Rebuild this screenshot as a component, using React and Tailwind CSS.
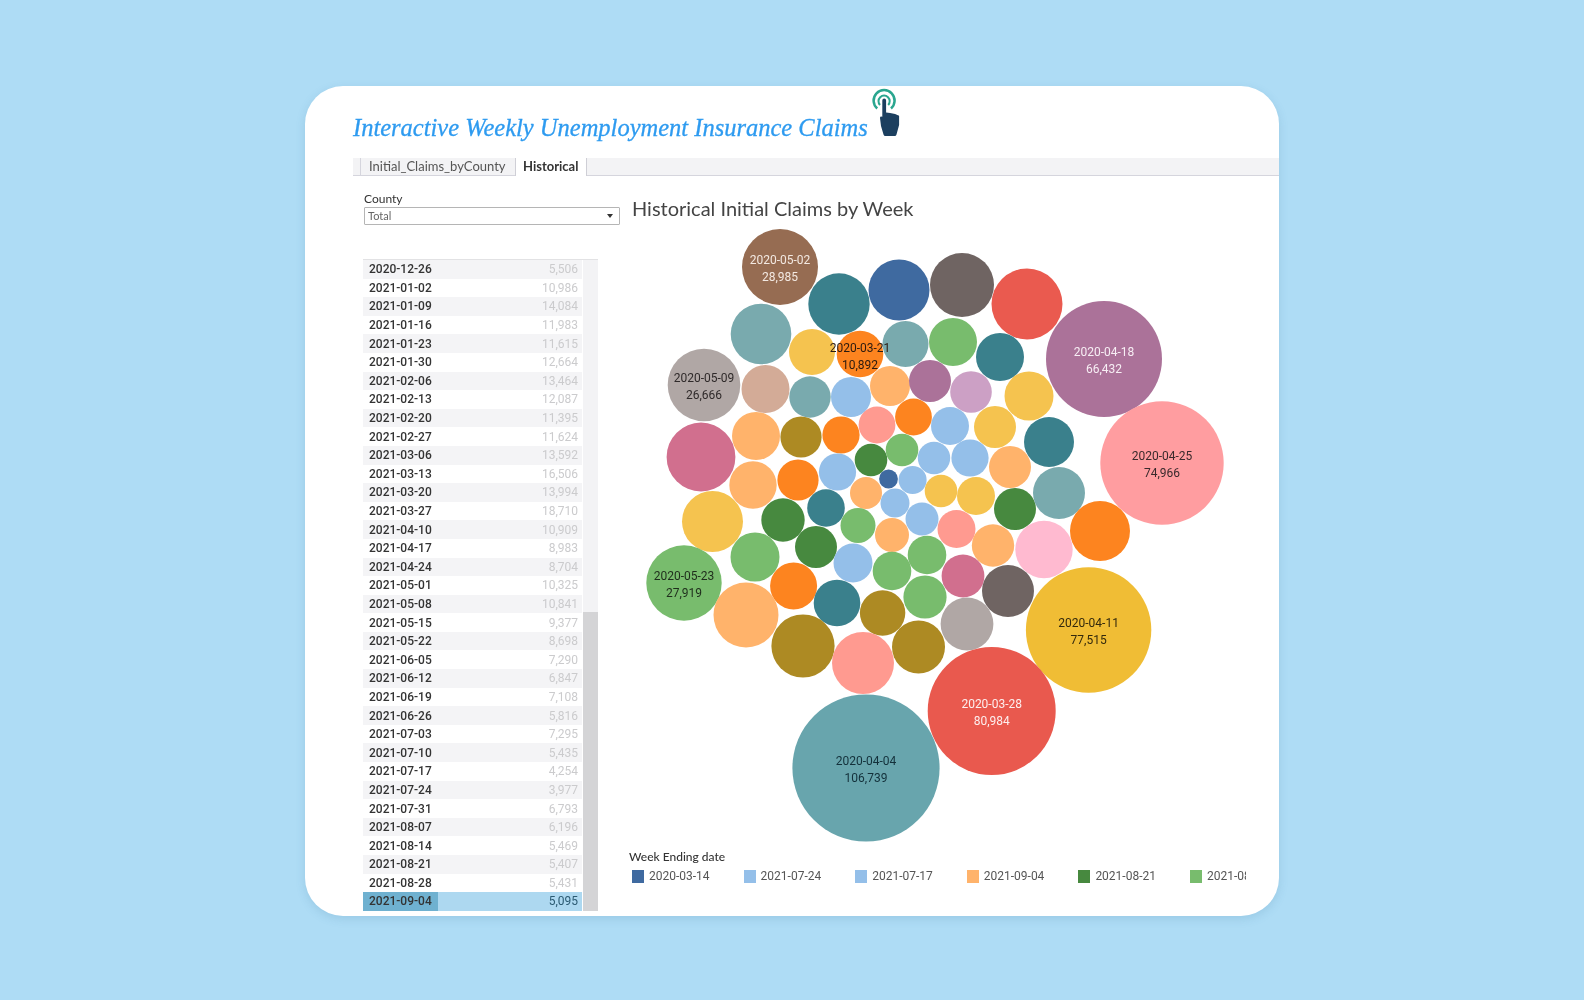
import React from "react";

const tealDark = "#3a808c", blue = "#3f6aa0", stone = "#6f6462", red = "#ea5a4f", purple = "#ab7299";
const pink = "#ff9da0", teal = "#79aaae", yellow = "#f5c34f", orange = "#fd841f", green = "#78bc6d";
const darkGreen = "#47893f", skyBlue = "#94bfe9", peach = "#ffb36b", olive = "#ad8a23", salmon = "#ff9a90";
const rose = "#d16f8e", tan = "#d3ab97", gray = "#b0a7a5", lilac = "#cca0c5", lightPink = "#ffbad0";

// cx, cy, r, fill, [date, value, text colour]
const bubbles = [
    [780, 267, 38, "#966c52", "2020-05-02", "28,985", "#f3e9e2"],
    [839, 304, 30.7, tealDark], [899, 290, 30.5, blue], [962, 285, 32, stone], [1027, 304, 35.5, red],
    [1104, 359, 58, purple, "2020-04-18", "66,432", "#f7eef4"],
    [1162, 463, 61.7, pink, "2020-04-25", "74,966", "#3a2a2c"],
    [761, 334, 30.3, teal], [812, 352, 23, yellow],
    [860, 354, 23.3, orange],
    [905.5, 344, 23, teal], [953, 342, 24, green], [1000, 357, 24, tealDark],
    [704, 385, 36.3, gray, "2020-05-09", "26,666", "#2f2a2a"],
    [765.5, 389, 24, tan], [810, 397, 20.7, teal], [851, 397, 20, skyBlue], [890, 386, 20, peach],
    [930, 381, 21, purple], [971, 392, 20.8, lilac], [1029, 396, 24.5, yellow], [701, 457, 34.4, rose],
    [756, 436, 24, peach], [801, 437, 20.6, olive], [841, 435, 18.6, orange], [877, 425, 18.4, salmon],
    [913.5, 417, 18.4, orange], [950, 426, 19, skyBlue], [995, 427, 21, yellow], [1049, 442, 25, tealDark],
    [753, 485, 23.7, peach], [798, 480, 20.6, orange], [837.5, 472, 18.6, skyBlue], [871, 460, 16.3, darkGreen],
    [902, 450, 16.3, green], [934, 458, 16.2, skyBlue], [970, 458, 18.6, skyBlue], [1010, 467, 21, peach],
    [888.5, 479, 9.4, blue], [912.6, 480, 14, skyBlue], [866, 493, 16, peach], [941, 491, 16.3, yellow],
    [976, 496, 19, yellow], [1015, 509, 21, darkGreen], [1059, 493, 26, teal], [895, 503, 14.5, skyBlue],
    [922, 519, 16.5, skyBlue], [712.5, 521.5, 30.5, yellow], [783, 520, 21.7, darkGreen], [826, 508, 18.8, tealDark],
    [858, 525.5, 17.5, green], [892, 535, 17, peach], [956.5, 529, 19, salmon], [993, 545.5, 21.2, peach],
    [1044, 549.5, 28.7, lightPink], [1100, 531, 30, orange],
    [684, 583, 37.7, green, "2020-05-23", "27,919", "#1f2d1c"],
    [755, 557, 24.5, green], [816, 547, 21, darkGreen], [853, 563, 19.5, skyBlue], [927, 555, 19.3, green],
    [892, 571, 19.3, green], [793.6, 586, 23.5, orange], [837, 603, 23.3, tealDark], [882.6, 613, 22.7, olive],
    [925, 597, 21.6, green], [963, 576, 21.4, rose], [1008, 591, 26, stone], [967, 624, 26.4, gray],
    [1088.6, 630, 62.7, "#f0bd35", "2020-04-11", "77,515", "#33290d"],
    [746, 615, 32.5, peach], [803, 646, 31.6, olive], [863, 663, 31, salmon], [918.5, 647, 26.5, olive],
    [991.7, 711, 64, "#e9594e", "2020-03-28", "80,984", "#fdeeee"],
    [866, 768, 73.6, "#68a5ad", "2020-04-04", "106,739", "#13303a"],
];

const rows = [
    ["2020-12-26", "5,506"], ["2021-01-02", "10,986"], ["2021-01-09", "14,084"], ["2021-01-16", "11,983"],
    ["2021-01-23", "11,615"], ["2021-01-30", "12,664"], ["2021-02-06", "13,464"], ["2021-02-13", "12,087"],
    ["2021-02-20", "11,395"], ["2021-02-27", "11,624"], ["2021-03-06", "13,592"], ["2021-03-13", "16,506"],
    ["2021-03-20", "13,994"], ["2021-03-27", "18,710"], ["2021-04-10", "10,909"], ["2021-04-17", "8,983"],
    ["2021-04-24", "8,704"], ["2021-05-01", "10,325"], ["2021-05-08", "10,841"], ["2021-05-15", "9,377"],
    ["2021-05-22", "8,698"], ["2021-06-05", "7,290"], ["2021-06-12", "6,847"], ["2021-06-19", "7,108"],
    ["2021-06-26", "5,816"], ["2021-07-03", "7,295"], ["2021-07-10", "5,435"], ["2021-07-17", "4,254"],
    ["2021-07-24", "3,977"], ["2021-07-31", "6,793"], ["2021-08-07", "6,196"], ["2021-08-14", "5,469"],
    ["2021-08-21", "5,407"], ["2021-08-28", "5,431"], ["2021-09-04", "5,095"],
];

const legend = [
    ["2020-03-14", "bg-[#3f6aa0]"],
    ["2021-07-24", "bg-[#94bfe9]"],
    ["2021-07-17", "bg-[#94bfe9]"],
    ["2021-09-04", "bg-[#ffb36b]"],
    ["2021-08-21", "bg-[#47893f]"],
    ["2021-08-07", "bg-[#78bc6d]"],
];

const TapIcon = () => (
    <svg width="30" height="50" viewBox="0 0 30 50" className="shrink-0 ml-[4px]">
        <path d="M5.2 20.5A10.5 10.5 0 1 1 19 20.5" fill="none" stroke="#2aa68f" strokeWidth="2.5" />
        <path d="M8 17A5.6 5.6 0 1 1 16.2 17" fill="none" stroke="#2aa68f" strokeWidth="2" />
        <path d="M10.3 12.5a1.9 1.9 0 0 1 3.8 0V24.5l4 .6 5 1 4 1.6V37l-2.6 9.5q-.3 1.5-2 1.5H13.5q-1.6 0-2-1.5L9 38l-1-8q0-2 2.3-1.2z" fill="#1c3f5f" />
    </svg>
);

const App = () => {
    return (
        <div className="h-[1000px] bg-[#aedcf5] flex justify-center pt-[86px] font-['Lato',sans-serif]">
            <div className="w-[974px] h-[830px] bg-white rounded-[38px] shadow-[0_3px_10px_rgba(60,120,160,0.18)] overflow-hidden pl-[48px] blur-[0.35px]">
                {/* title */}
                <div className="h-[72px] flex items-end pb-[20px]">
                    <h1 className="font-['Liberation_Serif',serif] italic font-medium text-[24.5px] leading-[32px] text-[#2e9bf0] mb-[-6px] [-webkit-text-stroke:0.3px_#2e9bf0]">
                        Interactive Weekly Unemployment Insurance Claims
                    </h1>
                    <TapIcon />
                </div>

                {/* tabs */}
                <div className="h-[18px] flex bg-[#f3f3f5] border-b border-[#d5d5dd] text-[13px] leading-[17px]">
                    <div className="ml-[7px] w-[154px] border-l border-[#d5d5dd] pl-[8px] text-[#555]">Initial_Claims_byCounty</div>
                    <div className="ml-[1px] w-[72px] h-[18px] bg-white border-x border-[#cfcfd6] pl-[7px] font-bold text-[#333]">Historical</div>
                </div>

                <div className="flex">
                    {/* filter and table */}
                    <div className="w-[276px] pl-[10px] pt-[15px] shrink-0">
                        <div className="text-[12px] leading-[16px] text-[#333] pl-[1px]">County</div>
                        <div className="ml-[1px] w-[256px] h-[18px] border border-[#b5b5b5] rounded-[1px] flex items-center justify-between pl-[3px] pr-[6px] text-[11px] text-[#666]">
                            <span>Total</span>
                            <span className="w-0 h-0 border-x-[3px] border-x-transparent border-t-[4px] border-t-[#333]" />
                        </div>
                        <div className="mt-[34px] flex w-[235px] border-t border-[#e2e2e4] font-['Roboto',sans-serif]">
                            <div className="w-[219px]">
                                {rows.map(([date, value], index) => {
                                    const selected = index === rows.length - 1;
                                    return (
                                        <div key={date} className={`h-[18.6px] flex items-center justify-between pr-[4px] text-[12px] ${selected ? "bg-[#add8f0]" : index % 2 === 0 ? "bg-[#f4f4f6]" : "bg-white"}`}>
                                            <span className={`w-[75px] h-full flex items-center pl-[6px] font-medium text-[#333] ${selected ? "bg-[#6fb1d0]" : ""}`}>{date}</span>
                                            <span className={selected ? "text-[#2b5a72]" : "text-[#cbcbcd]"}>{value}</span>
                                        </div>
                                    );
                                })}
                            </div>
                            <div className="ml-[1px] w-[15px] bg-[#f3f3f5] flex flex-col">
                                <div className="mt-[352px] flex-1 bg-[#d4d4d6]" />
                            </div>
                        </div>
                    </div>

                    {/* chart */}
                    <div className="flex-1 min-w-0">
                        <h2 className="ml-[3px] mt-[19px] text-[20px] leading-[26px] text-[#444]">Historical Initial Claims by Week</h2>
                        <svg width="650" height="620" viewBox="629 226 650 620" className="block mt-[5px] font-['Roboto',sans-serif]">
                            {bubbles.map(([cx, cy, r, fill]) => (
                                <circle key={`${cx}-${cy}`} cx={cx} cy={cy} r={r} fill={fill} />
                            ))}
                            {bubbles.filter((b) => b[4]).map(([cx, cy, , , date, value, color]) => (
                                <text key={date} x={cx} y={cy} textAnchor="middle" fill={color} fontSize="12">
                                    <tspan x={cx} dy="-3">{date}</tspan>
                                    <tspan x={cx} dy="17">{value}</tspan>
                                </text>
                            ))}
                            <text x="860" textAnchor="middle" fill="#2a1a10" fontSize="12">
                                <tspan x="860" y="352">2020-03-21</tspan>
                                <tspan x="860" y="369">10,892</tspan>
                            </text>
                        </svg>
                        <div className="mt-[3px] text-[12px] leading-[16px] font-medium text-[#333]">Week Ending date</div>
                        <div className="mt-[4px] ml-[3px] w-[614px] flex overflow-hidden text-[12px] leading-[14px] text-[#555] font-['Roboto',sans-serif]">
                            {legend.map(([label, swatch]) => (
                                <div key={label} className="w-[111.6px] shrink-0 flex items-center gap-[5px]">
                                    <span className={`w-[12px] h-[13px] ${swatch}`} />
                                    <span>{label}</span>
                                </div>
                            ))}
                        </div>
                    </div>
                </div>
            </div>
        </div>
    );
};

export default App;
